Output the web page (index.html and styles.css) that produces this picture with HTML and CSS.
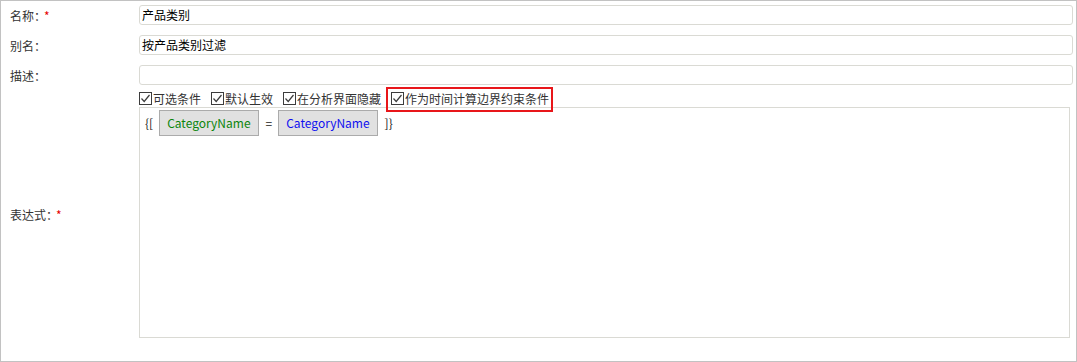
FILE: index.html
```html
<!DOCTYPE html>
<html>
<head>
    <title>过滤条件</title>
    <link rel="stylesheet" href="styles.css">
</head>
<body>

<div class="panel">
    <div class="row">
        <div class="label">名称：<span class="req">*</span></div>
        <div class="input">产品类别</div>
    </div>
    <div class="row">
        <div class="label">别名：</div>
        <div class="input">按产品类别过滤</div>
    </div>
    <div class="row row-last">
        <div class="label">描述：</div>
        <div class="input"></div>
    </div>
    <div class="row row-expr">
        <div class="label">表达式：<span class="req">*</span></div>
        <div class="field">
            <div class="options">
                <span class="check"><svg width="13" height="13" viewBox="0 0 13 13"><rect x="0.5" y="0.5" width="12" height="12" fill="#fff" stroke="#3c3c3c"/><path d="M2.5 6.5 L5.2 9.5 L10.5 3" fill="none" stroke="#3c3c3c" stroke-width="1.2"/></svg>可选条件</span>
                <span class="check"><svg width="13" height="13" viewBox="0 0 13 13"><rect x="0.5" y="0.5" width="12" height="12" fill="#fff" stroke="#3c3c3c"/><path d="M2.5 6.5 L5.2 9.5 L10.5 3" fill="none" stroke="#3c3c3c" stroke-width="1.2"/></svg>默认生效</span>
                <span class="check"><svg width="13" height="13" viewBox="0 0 13 13"><rect x="0.5" y="0.5" width="12" height="12" fill="#fff" stroke="#3c3c3c"/><path d="M2.5 6.5 L5.2 9.5 L10.5 3" fill="none" stroke="#3c3c3c" stroke-width="1.2"/></svg>在分析界面隐藏</span>
                <span class="check marked"><svg width="13" height="13" viewBox="0 0 13 13"><rect x="0.5" y="0.5" width="12" height="12" fill="#fff" stroke="#3c3c3c"/><path d="M2.5 6.5 L5.2 9.5 L10.5 3" fill="none" stroke="#3c3c3c" stroke-width="1.2"/></svg>作为时间计算边界约束条件</span>
            </div>
            <div class="expr">
                <span class="sym">{[</span>
                <span class="token field-name">CategoryName</span>
                <span class="sym">=</span>
                <span class="token param-name">CategoryName</span>
                <span class="sym">]}</span>
            </div>
        </div>
    </div>
</div>

</body>
</html>
```

FILE: styles.css
```css
body { margin: 0; font-family: "Noto Sans CJK SC", "Liberation Sans", sans-serif; font-size: 12px; color: #333; background: #fff; }
.panel { box-sizing: border-box; width: 1077px; height: 362px; border: 1px solid #c2c2c2; padding-top: 4px; }
.row { display: flex; align-items: center; margin-bottom: 10px; }
.row-last { margin-bottom: 5px; }
.label { box-sizing: border-box; width: 138px; flex: none; padding-left: 9px; }
.req { color: #e60000; margin-left: -2px; }
.input { box-sizing: border-box; flex: 1; height: 20px; line-height: 18px; margin-right: 3px; padding-left: 2px; border: 1px solid #dadad4; border-radius: 3px; color: #000; }
.row-expr { align-items: center; margin-bottom: 0; }
.field { flex: 1; margin-right: 6px; }
.options { display: flex; align-items: center; height: 17px; }
.check { display: inline-flex; align-items: center; margin-right: 10px; color: #333; white-space: nowrap; }
.check svg { display: block; margin-right: 1px; }
.marked { position: relative; }
.marked::after { content: ""; position: absolute; left: -5px; right: -4px; top: -3px; bottom: -5px; border: 2px solid #e8161a; }
.expr { box-sizing: border-box; height: 231px; border: 1px solid #dadad4; padding: 2px 0 0 5px; display: flex; align-items: flex-start; }
.sym { line-height: 26px; margin-right: 6px; color: #222; }
.token { box-sizing: border-box; height: 26px; line-height: 24px; padding: 0 7px; border: 1px solid #ababab; background: #e1e1e1; margin-right: 7px; }
.field-name { color: #0c850c; }
.param-name { color: #1010f0; }
```
